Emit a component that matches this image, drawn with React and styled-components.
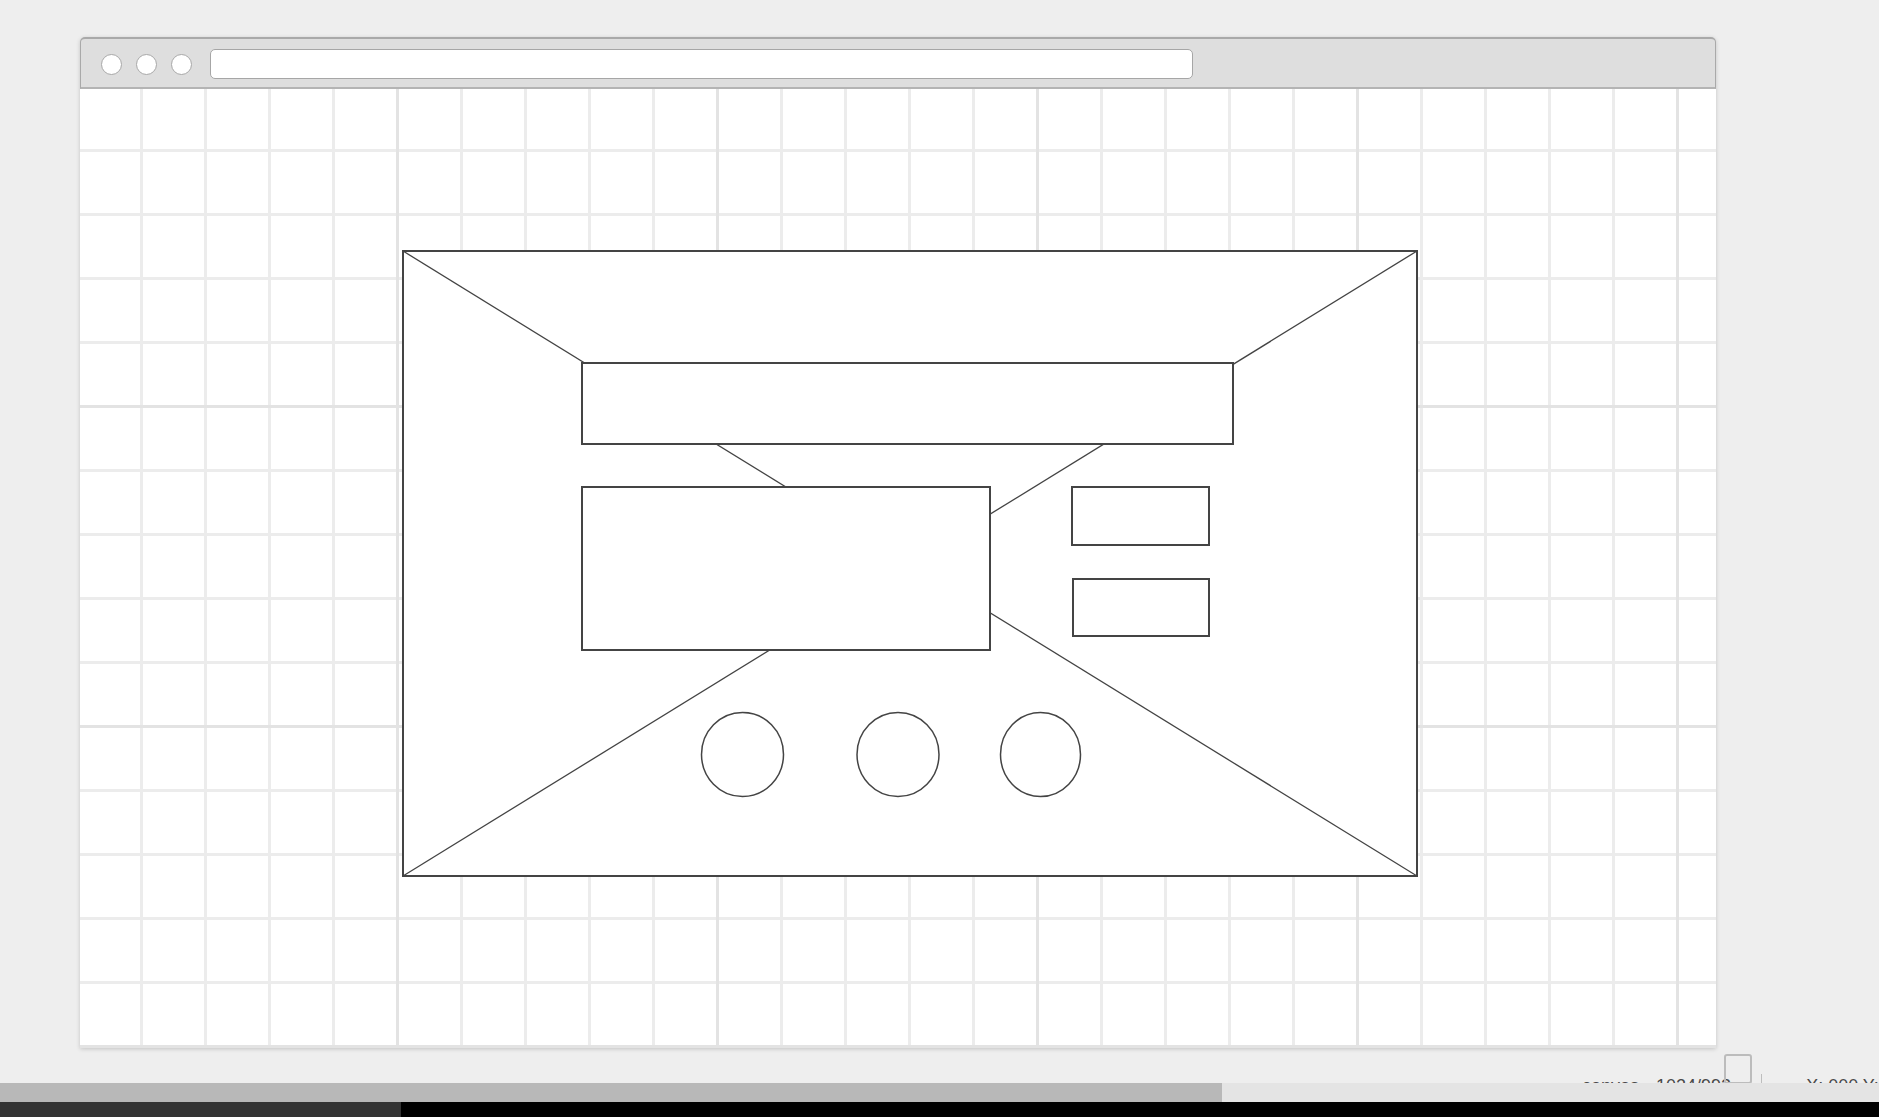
import React from "react";
import styled, { createGlobalStyle } from "styled-components";

const Global = createGlobalStyle`
  html, body { margin: 0; padding: 0; background: #eeeeee; }
  body { font-family: "Liberation Sans", Arial, sans-serif; overflow: hidden; }
  * { box-sizing: border-box; }
`;

const Page = styled.div`
  width: 1879px;
  height: 1117px;
  display: flex;
  flex-direction: column;
  overflow: hidden;
  background: #eeeeee;
`;

const Stage = styled.div`
  padding: 37px 0 0 80px;
  flex-shrink: 0;
`;

const Window = styled.div`
  width: 1636px;
  display: flex;
  flex-direction: column;
  box-shadow: 0 1px 4px rgba(0, 0, 0, 0.18);
  border-radius: 5px 5px 0 0;
`;

const TitleBar = styled.div`
  height: 52px;
  display: flex;
  align-items: center;
  padding: 2px 0 0 20px;
  background: #dedede;
  border: 1px solid #a9a9a9;
  border-top-width: 2px;
  border-bottom: 2px solid #b4b4b4;
  border-radius: 5px 5px 0 0;
`;

const Dots = styled.div`
  display: flex;
  gap: 14px;
`;

const Dot = styled.span`
  width: 21px;
  height: 21px;
  border-radius: 50%;
  background: #fff;
  border: 1.5px solid #a8a8a8;
`;

const AddressBar = styled.div`
  margin-left: 18px;
  width: 983px;
  height: 30px;
  background: #fff;
  border: 1.5px solid #a6a6a6;
  border-radius: 5px;
`;

const Canvas = styled.div`
  height: 959px;
  padding: 161px 0 0 322px;
  background-color: #fff;
  background-image:
    linear-gradient(to right, transparent 316px, #e3e3e3 316px, #e3e3e3 319px, transparent 319px),
    linear-gradient(to bottom, transparent 316px, #e3e3e3 316px, #e3e3e3 319px, transparent 319px),
    linear-gradient(to right, transparent 60px, #ececec 60px, #ececec 63px, transparent 63px),
    linear-gradient(to bottom, transparent 60px, #ececec 60px, #ececec 63px, transparent 63px);
  background-size: 320px 320px, 320px 320px, 64px 64px, 64px 64px;
`;

const Wireframe = styled.svg`
  display: block;
`;

const StatusBar = styled.div`
  position: relative;
  height: 35px;
  flex-shrink: 0;
  display: flex;
  align-items: flex-start;
  padding-left: 1582px;
  overflow: hidden;
  white-space: nowrap;
  font-size: 18px;
  color: #4a4a4a;
`;

const StatusText = styled.span`
  flex-shrink: 0;
  margin-top: 28px;
  margin-left: ${(p) => p.$gap || 0}px;
`;

const Divider = styled.span`
  flex-shrink: 0;
  width: 1px;
  height: 20px;
  margin-top: 26px;
  margin-left: 30px;
  background: #bdbdbd;
`;

const FitButton = styled.span`
  position: absolute;
  top: 6px;
  right: 127px;
  width: 28px;
  height: 30px;
  border: 2px solid #bcbcbc;
  border-radius: 3px;
`;

const ScrollTrack = styled.div`
  height: 19px;
  flex-shrink: 0;
  background: #e4e4e4;
  display: flex;
`;

const ScrollThumb = styled.div`
  width: 1222px;
  background: #b8b8b8;
`;

const BottomStrip = styled.div`
  height: 15px;
  flex-shrink: 0;
  background: #000;
  display: flex;
`;

const StripTab = styled.div`
  width: 401px;
  background: #333;
`;

const ink = "#444";

export default function App() {
  return (
    <>
      <Global />
      <Page>
        <Stage>
          <Window>
            <TitleBar>
              <Dots>
                <Dot />
                <Dot />
                <Dot />
              </Dots>
              <AddressBar />
            </TitleBar>
            <Canvas>
              <Wireframe width="1016" height="628" viewBox="0 0 1016 628">
                <rect x="1" y="1" width="1014" height="625" fill="#fff" stroke={ink} strokeWidth="2" />
                <line x1="1" y1="1" x2="1015" y2="626" stroke={ink} strokeWidth="1.3" />
                <line x1="1015" y1="1" x2="1" y2="626" stroke={ink} strokeWidth="1.3" />
                <rect x="180" y="113" width="651" height="81" fill="#fff" stroke={ink} strokeWidth="2" />
                <rect x="180" y="237" width="408" height="163" fill="#fff" stroke={ink} strokeWidth="2" />
                <rect x="670" y="237" width="137" height="58" fill="#fff" stroke={ink} strokeWidth="2" />
                <rect x="671" y="329" width="136" height="57" fill="#fff" stroke={ink} strokeWidth="2" />
                <ellipse cx="340.5" cy="504.5" rx="41" ry="42" fill="#fff" stroke={ink} strokeWidth="1.5" />
                <ellipse cx="496" cy="504.5" rx="41" ry="42" fill="#fff" stroke={ink} strokeWidth="1.5" />
                <ellipse cx="638.5" cy="504.5" rx="40" ry="42" fill="#fff" stroke={ink} strokeWidth="1.5" />
              </Wireframe>
            </Canvas>
          </Window>
        </Stage>
        <StatusBar>
          <StatusText>canvas</StatusText>
          <StatusText $gap={17}>1024/992</StatusText>
          <Divider />
          <StatusText $gap={44}>X: 000 Y: 000</StatusText>
          <FitButton />
        </StatusBar>
        <ScrollTrack>
          <ScrollThumb />
        </ScrollTrack>
        <BottomStrip>
          <StripTab />
        </BottomStrip>
      </Page>
    </>
  );
}
